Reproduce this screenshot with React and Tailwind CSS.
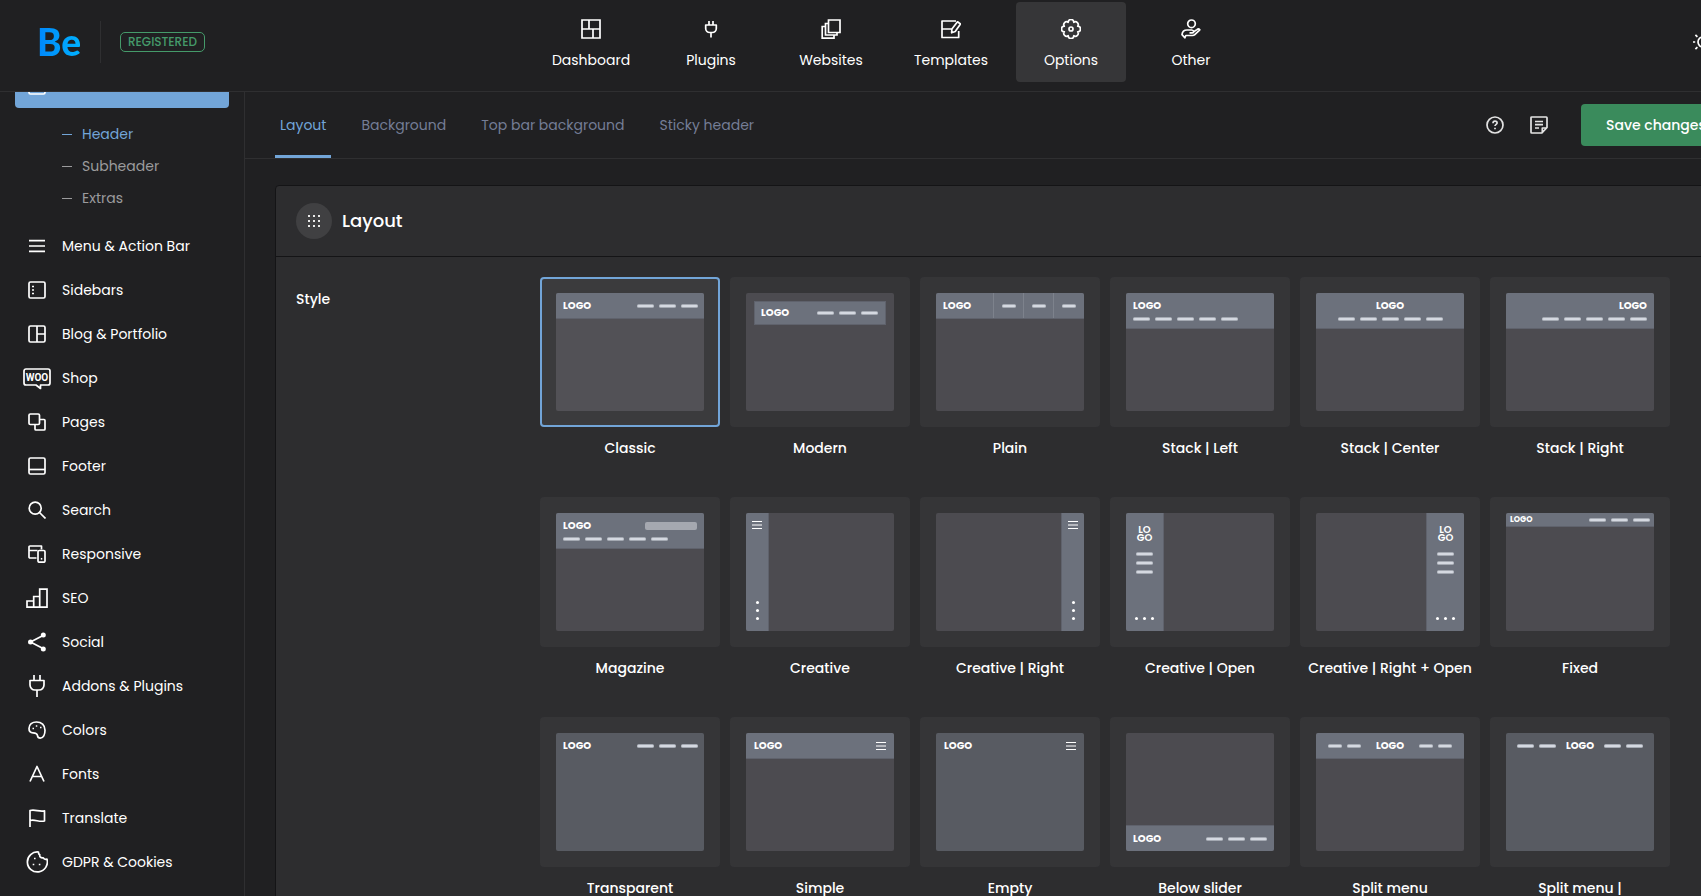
import { useState } from "react";
import clsx from "clsx";

function Icon({ size = 20, className, children }) {
  return (
    <svg
      width={size}
      height={size}
      viewBox={`0 0 ${size} ${size}`}
      fill="none"
      stroke="currentColor"
      strokeWidth="1.7"
      strokeLinejoin="round"
      className={clsx("shrink-0", className)}
      aria-hidden="true"
    >
      {children}
    </svg>
  );
}

const navItems = [
  {
    label: "Dashboard",
    icon: (
      <Icon>
        <path d="M1 1h18v18H1zM1 10h18M8 1v9M12 10v9" strokeLinejoin="miter" />
      </Icon>
    ),
  },
  {
    label: "Plugins",
    icon: (
      <Icon>
        <path d="M8 2v4M12 2v4M4.700 6h10.600v3.500a4 4 0 0 1-4 4H8.700a4 4 0 0 1-4-4zM10 13.500V18.500" />
      </Icon>
    ),
  },
  {
    label: "Websites",
    icon: (
      <Icon>
        <path d="M7.500 1h11.500v12.500H7.500zM7.500 4.500H4.500v11.500H16v-2.500M4.500 7.500H1.200v11.700H13V16" strokeLinejoin="miter" />
      </Icon>
    ),
  },
  {
    label: "Templates",
    icon: (
      <Icon>
        <path d="M15 2H1v16.500h16.700v-6.500M1 10h10M16.500 2.800l3 2.200-5.300 7.500-3.600 1.300.3-3.700z" />
      </Icon>
    ),
  },
  {
    label: "Options",
    icon: (
      <Icon>
        <path d="M16.700 7.200a2.800 2.800 0 0 1 0 5.600A2.800 2.800 0 0 1 12.800 16.700a2.800 2.800 0 0 1-5.600 0A2.800 2.800 0 0 1 3.300 12.800a2.800 2.800 0 0 1 0-5.600A2.800 2.800 0 0 1 7.200 3.300a2.800 2.800 0 0 1 5.600 0A2.800 2.800 0 0 1 16.700 7.200z" />
        <circle cx="10" cy="10" r="2" />
      </Icon>
    ),
  },
  {
    label: "Other",
    icon: (
      <Icon>
        <circle cx="10.500" cy="4.800" r="3.800" />
        <path d="M3.800 18.800l1-2.300h6.700c1 0 1.700-.3 2.300-.9l5-4.800c-.8-1-2-.9-2.900-.2l-3.200 2.200c-.2-1.400-1-1.800-2-1.800H6c-2.800 0-4.700 1.700-5 4.600zM8.500 13.800h2.800c.9 0 1.400-.4 1.400-1" />
      </Icon>
    ),
  },
];

const subItems = ["Header", "Subheader", "Extras"];

const menuItems = [
  {
    label: "Menu & Action Bar",
    icon: (
      <Icon size={18}>
        <path d="M1 3.700h16M1 9h16M1 14.300h16" />
      </Icon>
    ),
  },
  {
    label: "Sidebars",
    icon: (
      <Icon size={18}>
        <rect x="1" y="1" width="16" height="16" rx="1.500" />
        <path d="M4 5.500h2M4 9h2M4 12.500h2" />
      </Icon>
    ),
  },
  {
    label: "Blog & Portfolio",
    icon: (
      <Icon size={18}>
        <rect x="1" y="1" width="16" height="16" rx="1.500" />
        <path d="M9 1v16M9 9h8" />
      </Icon>
    ),
  },
  {
    label: "Shop",
    icon: (
      <svg width="28" height="22" viewBox="0 0 28 22" fill="none" stroke="currentColor" strokeWidth="1.700" className="translate-y-px" aria-hidden="true">
        <path d="M3 1h22a2 2 0 0 1 2 2v12a2 2 0 0 1-2 2h-7.500v3.500L13 17H3a2 2 0 0 1-2-2V3a2 2 0 0 1 2-2z" strokeLinejoin="round" />
        <text x="14" y="12.500" textAnchor="middle" fontFamily="Roboto, sans-serif" fontSize="10" fontWeight="700" fill="currentColor" stroke="none">
          WOO
        </text>
      </svg>
    ),
  },
  {
    label: "Pages",
    icon: (
      <Icon size={18}>
        <rect x="1" y="1" width="10.500" height="10.500" rx="1.300" />
        <path d="M11.500 6.500H16a1 1 0 0 1 1 1V16a1 1 0 0 1-1 1H8a1 1 0 0 1-1-1v-4.500" />
      </Icon>
    ),
  },
  {
    label: "Footer",
    icon: (
      <Icon size={18}>
        <rect x="1" y="1" width="16" height="16" rx="1.500" />
        <path d="M1 12.500h16" />
      </Icon>
    ),
  },
  {
    label: "Search",
    icon: (
      <Icon size={18}>
        <circle cx="7.200" cy="7.200" r="6" />
        <path d="M11.500 11.500l6 6" />
      </Icon>
    ),
  },
  {
    label: "Responsive",
    icon: (
      <Icon size={18}>
        <path d="M8.500 13H2a1 1 0 0 1-1-1V2a1 1 0 0 1 1-1h11.500v3.500M1 5.500h8.500" />
        <rect x="10" y="5.500" width="7" height="11.700" rx="1.200" />
        <path d="M12.800 13.800h1.500" />
      </Icon>
    ),
  },
  {
    label: "SEO",
    icon: (
      <Icon size={22}>
        <path d="M1 14h6.700v6.200H1zM7.700 9.500h6v10.700h-6zM13.700 2.200H21v18h-7.300z" strokeLinejoin="miter" />
      </Icon>
    ),
  },
  {
    label: "Social",
    icon: (
      <Icon size={20}>
        <path d="M17 3L3.500 10 17 17" />
        <g fill="currentColor" stroke="none">
          <circle cx="16.300" cy="3" r="2.500" />
          <circle cx="3.500" cy="10" r="2.500" />
          <circle cx="16.300" cy="17" r="2.500" />
        </g>
      </Icon>
    ),
  },
  {
    label: "Addons & Plugins",
    icon: (
      <Icon size={22}>
        <path d="M8 0v5.500M14 0v5.500M4 5.500h14V10a5 5 0 0 1-5 5H9a5 5 0 0 1-5-5zM11 15v7" />
      </Icon>
    ),
  },
  {
    label: "Colors",
    icon: (
      <Icon size={18}>
        <path d="M8.500 1C4.200 1 1 3.300 1 7.500c0 2.500 1.500 4.300 4 4.300 2.800 0 4.200.7 4.500 2.800.2 1.500 1.300 2.500 2.800 2.500 3 0 4.700-3.600 4.700-7.800C17 4 13.500 1 8.500 1z" />
        <path d="M4.500 7.500H6M7.800 5h1.500M12 6.500h1.500" />
      </Icon>
    ),
  },
  {
    label: "Fonts",
    icon: (
      <Icon size={18}>
        <path d="M2 16.500L9 1.500l7 15M4.500 11.500h9" />
      </Icon>
    ),
  },
  {
    label: "Translate",
    icon: (
      <Icon size={18}>
        <path d="M2 18V1.500c5-1.500 9 1.500 14.500.3V12c-5.500 1.200-9.500-1.800-14.500-.5" />
      </Icon>
    ),
  },
  {
    label: "GDPR & Cookies",
    icon: (
      <Icon size={22}>
        <path d="M12.500 1A10 10 0 1 0 21 8.200c-1.800.4-3.200.1-3.700-1.400-2.700.3-4-.9-3.500-3.100-1.100-.5-1.500-1.400-1.300-2.700z" />
        <path d="M8 7.500h1.600M6.700 13.500h1.600M12.800 13.500h1.600" />
      </Icon>
    ),
  },
];

const tabs = ["Layout", "Background", "Top bar background", "Sticky header"];

/* Pieces of the layout thumbnails */

function Logo({ small = false }) {
  return (
    <span className={clsx("font-bold text-white", small ? "text-[8px]/[10px]" : "text-[10px]/[12px]")}>
      LOGO
    </span>
  );
}

function Dashes({ count = 3, short = false, vertical = false }) {
  return (
    <span className={clsx("flex gap-[5px]", vertical && "flex-col")}>
      {Array.from({ length: count }, (_, i) => (
        <span
          key={i}
          className={clsx(
            "h-1 rounded-full border-y border-[#a4a9b2] bg-[#d5d9e1]",
            short ? "w-[14px]" : "w-[17px]"
          )}
        />
      ))}
    </span>
  );
}

function Burger() {
  return (
    <svg width="10" height="8" viewBox="0 0 10 8" stroke="#fff" aria-hidden="true">
      <path d="M0 .5h10M0 4h10M0 7.500h10" />
    </svg>
  );
}

function Dots({ vertical = false }) {
  return (
    <span className={clsx("flex gap-[5px]", vertical && "flex-col")}>
      <span className="size-[3px] rounded-full bg-white" />
      <span className="size-[3px] rounded-full bg-white" />
      <span className="size-[3px] rounded-full bg-white" />
    </span>
  );
}

function Bar({ height = "h-[26px]", className, children }) {
  return (
    <span className={clsx("flex items-center border-[#5f626c] bg-[#6c717c]", height, className)}>
      {children}
    </span>
  );
}

function Stack({ align, children }) {
  return (
    <Bar height="h-9" className="border-b px-[7px]">
      <span className={clsx("flex w-full flex-col gap-[5px]", align)}>{children}</span>
    </Bar>
  );
}

function Rail({ right = false, wide = false, children }) {
  return (
    <span
      className={clsx(
        "flex h-full flex-col items-center justify-between border-[#5f626c] bg-[#6c717c]",
        right ? "ml-auto border-l" : "border-r",
        wide ? "w-[38px] pt-[13px] pb-[11px]" : "w-[23px] pt-2 pb-[11px]"
      )}
    >
      {children}
    </span>
  );
}

function OpenRail({ right = false }) {
  return (
    <Rail wide right={right}>
      <span className="flex flex-col items-center gap-[10px]">
        <span className="text-center text-[10px]/[8px] font-semibold text-white">
          LO
          <br />
          GO
        </span>
        <Dashes vertical />
      </span>
      <Dots />
    </Rail>
  );
}

const layouts = [
  {
    label: "Classic",
    art: (
      <Bar className="justify-between border-b pr-[6px] pl-[7px]">
        <Logo />
        <Dashes />
      </Bar>
    ),
  },
  {
    label: "Modern",
    art: (
      <Bar height="h-6" className="mx-2 mt-2 justify-between border pr-[7px] pl-[6px]">
        <Logo />
        <Dashes />
      </Bar>
    ),
  },
  {
    label: "Plain",
    art: (
      <Bar className="border-b pr-px">
        <span className="flex flex-1 items-center pl-[7px]">
          <Logo />
        </span>
        {[0, 1, 2].map((i) => (
          <span key={i} className="flex h-full w-[30px] items-center justify-center border-l border-[#7d828c]">
            <Dashes count={1} short />
          </span>
        ))}
      </Bar>
    ),
  },
  {
    label: "Stack | Left",
    art: (
      <Stack align="items-start">
        <Logo />
        <Dashes count={5} />
      </Stack>
    ),
  },
  {
    label: "Stack | Center",
    art: (
      <Stack align="items-center">
        <Logo />
        <Dashes count={5} />
      </Stack>
    ),
  },
  {
    label: "Stack | Right",
    art: (
      <Stack align="items-end">
        <Logo />
        <Dashes count={5} />
      </Stack>
    ),
  },
  {
    label: "Magazine",
    art: (
      <Stack align="items-start">
        <span className="flex w-full items-center justify-between">
          <Logo />
          <span className="h-2 w-[52px] rounded-xs bg-[#a5a8b0]" />
        </span>
        <Dashes count={5} />
      </Stack>
    ),
  },
  {
    label: "Creative",
    art: (
      <Rail>
        <Burger />
        <Dots vertical />
      </Rail>
    ),
  },
  {
    label: "Creative | Right",
    art: (
      <Rail right>
        <Burger />
        <Dots vertical />
      </Rail>
    ),
  },
  { label: "Creative | Open", art: <OpenRail /> },
  { label: "Creative | Right + Open", art: <OpenRail right /> },
  {
    label: "Fixed",
    art: (
      <Bar height="h-[14px]" className="justify-between border-b px-1">
        <Logo small />
        <Dashes />
      </Bar>
    ),
  },
  {
    label: "Transparent",
    overlay: true,
    art: (
      <span className="flex h-[26px] items-center justify-between pr-[6px] pl-[7px]">
        <Logo />
        <Dashes />
      </span>
    ),
  },
  {
    label: "Simple",
    art: (
      <Bar className="justify-between border-b px-2">
        <Logo />
        <Burger />
      </Bar>
    ),
  },
  {
    label: "Empty",
    overlay: true,
    art: (
      <span className="flex h-[26px] items-center justify-between px-2">
        <Logo />
        <Burger />
      </span>
    ),
  },
  {
    label: "Below slider",
    art: (
      <Bar className="mt-auto justify-between border-t px-[7px]">
        <Logo />
        <Dashes />
      </Bar>
    ),
  },
  {
    label: "Split menu",
    art: (
      <Bar className="justify-between border-b px-3">
        <Dashes count={2} short />
        <Logo />
        <Dashes count={2} short />
      </Bar>
    ),
  },
  {
    label: "Split menu |",
    overlay: true,
    art: (
      <span className="flex h-[26px] items-center justify-between px-[11px]">
        <Dashes count={2} />
        <Logo />
        <Dashes count={2} />
      </span>
    ),
  },
];

function LayoutOption({ layout, checked, onChange }) {
  return (
    <label className="relative flex w-[180px] cursor-pointer flex-col items-center">
      <input
        type="radio"
        name="header-style"
        value={layout.label}
        checked={checked}
        onChange={onChange}
        className="sr-only"
      />
      <span
        className={clsx(
          "flex h-[150px] w-full rounded-[4px] border-2 p-[14px]",
          checked ? "border-[#72a5d8] bg-[#3b3b3d]" : "border-transparent bg-[#353537]"
        )}
      >
        <span
          className={clsx(
            "flex w-full flex-col overflow-hidden rounded-xs",
            layout.overlay ? "bg-[#585b62]" : checked ? "bg-[#525156]" : "bg-[#4c4b50]"
          )}
          aria-hidden="true"
        >
          {layout.art}
        </span>
      </span>
      <span className="mt-[11px] text-sm font-medium whitespace-nowrap text-white">{layout.label}</span>
    </label>
  );
}

export default function App() {
  const [activeNav, setActiveNav] = useState("Options");
  const [activeTab, setActiveTab] = useState("Layout");
  const [style, setStyle] = useState("Classic");

  return (
    <div className="h-screen overflow-hidden bg-[#202022] font-['Poppins','Inter',sans-serif] text-sm text-white">
      {/* the panel is a little wider than the window and runs off its right edge */}
      <div className="flex h-full w-[calc(100%+81px)] flex-col">
        <header className="shrink-0 border-b border-[#2f2f31] pb-[7px]">
          <div className="grid h-21 grid-cols-[1fr_auto_1fr] items-center">
            <div className="flex items-center pl-[37px]">
              <a
                href="#home"
                className="w-[45px] bg-linear-to-r from-[#0086fa] to-[#00b2ff] bg-clip-text font-['Lato',sans-serif] text-[37px]/[42px] font-black text-transparent"
              >
                Be
              </a>
              <span className="ml-[18px] h-[42px] w-px bg-[#2f2f31]" />
              <span className="ml-[19px] flex h-5 w-[85px] items-center justify-center rounded-[5px] border border-[#459a6a] text-xs font-medium text-[#459a6a]">
                REGISTERED
              </span>
            </div>

            <nav className="flex gap-[10px]">
              {navItems.map((item) => (
                <button
                  key={item.label}
                  type="button"
                  onClick={() => setActiveNav(item.label)}
                  className={clsx(
                    "flex h-20 w-[110px] flex-col items-center justify-center gap-[11px] rounded-[4px] pt-[5px]",
                    activeNav === item.label && "bg-[#363638]"
                  )}
                >
                  {item.icon}
                  <span>{item.label}</span>
                </button>
              ))}
            </nav>

            <div className="flex justify-end pr-[69px]">
              <button type="button" aria-label="Toggle light mode">
                <Icon>
                  <circle cx="10" cy="10" r="5" />
                  <path d="M10 0v2M10 18v2M0 10h2.200M17.800 10H20M2.400 2.900l2 2M15.600 15.600l2 2M2.400 17.100l2-2M15.600 4.400l2-2" />
                </Icon>
              </button>
            </div>
          </div>
        </header>

        <div className="flex min-h-0 flex-1">
          <aside className="w-[245px] shrink-0 overflow-hidden border-r border-[#2f2f31] px-[15px]">
            {/* list is scrolled so that the open group's heading sits under the header */}
            <a
              href="#header-group"
              aria-label="Header & Subheader"
              className="-mt-7 flex h-11 items-center rounded-[4px] bg-[#72a5d8] pl-[13px]"
            >
              <Icon size={18}>
                <rect x="1" y="1" width="16" height="16" rx="1.500" />
                <path d="M1 5.500h16" />
              </Icon>
            </a>
            <ul className="py-[10px]">
              {subItems.map((item) => (
                <li key={item}>
                  <a
                    href={`#${item.toLowerCase()}`}
                    className={clsx(
                      "flex h-8 items-center gap-[10px] pl-[47px]",
                      item === "Header" ? "text-[#72a5d8]" : "text-[#9b9b9d]"
                    )}
                  >
                    <span className="h-px w-[10px] bg-current" />
                    {item}
                  </a>
                </li>
              ))}
            </ul>
            <ul>
              {menuItems.map((item) => (
                <li key={item.label}>
                  <a href={`#${item.label}`} className="flex h-11 items-center gap-[11px] pl-2">
                    <span className="flex w-7 justify-center">{item.icon}</span>
                    {item.label}
                  </a>
                </li>
              ))}
            </ul>
          </aside>

          <main className="min-w-0 flex-1">
            <div className="flex h-[67px] items-center border-b border-[#2f2f31] pl-[30px]">
              <nav className="flex h-full gap-[25px]">
                {tabs.map((tab) => (
                  <button
                    key={tab}
                    type="button"
                    onClick={() => setActiveTab(tab)}
                    className={clsx(
                      "border-y-[3px] border-t-transparent px-[5px]",
                      activeTab === tab
                        ? "border-b-[#72a5d8] text-[#72a5d8]"
                        : "border-b-transparent text-[#747d96]"
                    )}
                  >
                    {tab}
                  </button>
                ))}
              </nav>
              <div className="ml-auto flex items-center gap-[26px] pr-[30px] text-[#e3e3e3]">
                <button type="button" aria-label="Help">
                  <Icon size={18}>
                    <circle cx="9" cy="9" r="8" />
                    <path d="M7 7.200c0-1.300.8-2.100 2-2.100s2.100.7 2.100 1.800c0 1.400-2.100 1.500-2.100 3.200M9 11.700v1.500" />
                  </Icon>
                </button>
                <button type="button" aria-label="Notes">
                  <Icon size={18}>
                    <path d="M17 11.500V1.700a.7.700 0 0 0-.7-.7H1.700a.7.700 0 0 0-.7.700v14.600c0 .4.300.7.700.7h10.200zM12.300 16.500V12H17M5 5.500h8M5 8.700h8M5 12h4" />
                  </Icon>
                </button>
                <button
                  type="button"
                  className="ml-[7px] h-[42px] w-[171px] rounded-[4px] bg-[#3a8b5c] px-[25px] text-left font-medium text-white"
                >
                  Save changes
                </button>
              </div>
            </div>

            <section className="mt-[26px] ml-[30px] rounded-tl-[4px] border border-[#141416] bg-[#2d2d2f]">
              <div className="flex h-[71px] items-center gap-[10px] border-b border-[#141416] px-5">
                <span className="flex size-9 items-center justify-center rounded-full bg-[#404042]">
                  <svg width="12" height="12" viewBox="0 0 12 12" fill="#e8e8e8" aria-hidden="true">
                    {[0, 5, 10].map((y) =>
                      [0, 5, 10].map((x) => <rect key={`${x}-${y}`} x={x} y={y} width="2" height="2" />)
                    )}
                  </svg>
                </span>
                <h2 className="text-lg font-medium">Layout</h2>
              </div>
              <fieldset className="flex p-5" aria-labelledby="style-label">
                <span id="style-label" className="w-[244px] shrink-0 pt-3 font-medium">
                  Style
                </span>
                <div className="grid grid-cols-[repeat(6,180px)] gap-x-[10px] gap-y-[39px]">
                  {layouts.map((layout) => (
                    <LayoutOption
                      key={layout.label}
                      layout={layout}
                      checked={style === layout.label}
                      onChange={() => setStyle(layout.label)}
                    />
                  ))}
                </div>
              </fieldset>
            </section>
          </main>
        </div>
      </div>
    </div>
  );
}
